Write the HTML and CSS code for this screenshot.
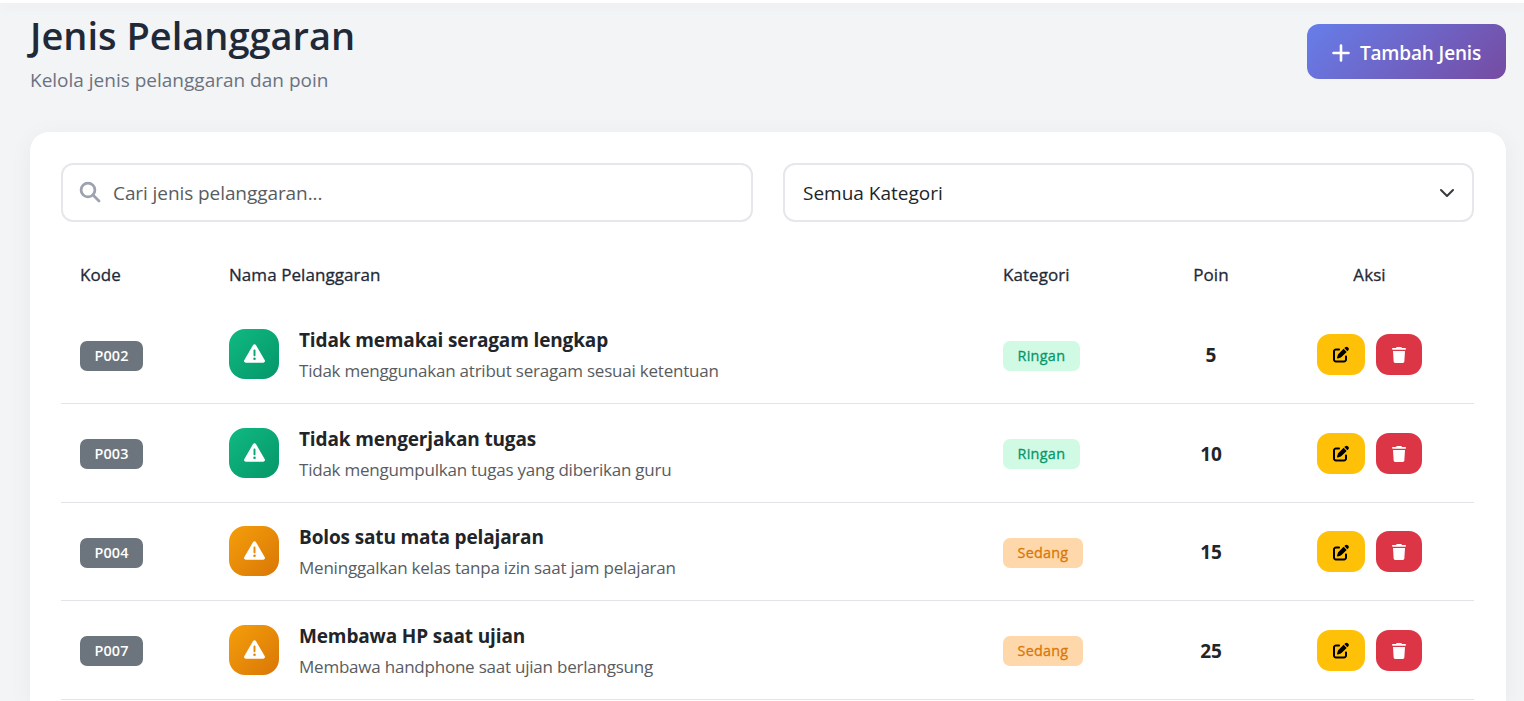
FILE: index.html
```html
<!DOCTYPE html>
<html lang="id">
<head>
<meta charset="utf-8">
<title>Jenis Pelanggaran</title>
<link rel="stylesheet" href="styles.css">
</head>
<body>
<svg class="sprite" aria-hidden="true">
  <symbol id="warning" viewBox="0 0 512 512"><path d="M256 32c14.200 0 27.300 7.500 34.500 19.800l216 368c7.300 12.400 7.300 27.700.2 40.100S486.300 480 472 480H40c-14.300 0-27.600-7.700-34.700-20.100s-7-27.800.2-40.100l216-368C228.700 39.500 241.800 32 256 32zm0 128c-13.300 0-24 10.700-24 24v112c0 13.300 10.700 24 24 24s24-10.700 24-24V184c0-13.300-10.700-24-24-24zm32 224a32 32 0 1 0-64 0 32 32 0 1 0 64 0z"/></symbol>
  <symbol id="edit" viewBox="0 0 512 512"><path d="M471.600 21.700c-21.900-21.900-57.300-21.900-79.200 0L362.300 51.700l97.900 97.900 30.100-30.100c21.900-21.900 21.900-57.300 0-79.200L471.600 21.700zm-299.200 220c-6.100 6.100-10.800 13.600-13.500 21.900l-29.600 88.800c-2.900 8.600-.6 18.100 5.800 24.600s15.900 8.700 24.600 5.800l88.800-29.600c8.200-2.700 15.700-7.400 21.900-13.500L437.700 172.300 339.700 74.300 172.400 241.700zM96 64C43 64 0 107 0 160v256c0 53 43 96 96 96h256c53 0 96-43 96-96v-96c0-17.700-14.300-32-32-32s-32 14.300-32 32v96c0 17.700-14.300 32-32 32H96c-17.700 0-32-14.300-32-32V160c0-17.700 14.300-32 32-32h96c17.700 0 32-14.300 32-32s-14.300-32-32-32H96z"/></symbol>
  <symbol id="trash" viewBox="0 0 448 512"><path d="M135.200 17.700L128 32H32C14.300 32 0 46.300 0 64s14.300 26 32 26h384c17.700 0 32-8.300 32-26s-14.300-32-32-32h-96l-7.200-14.300C307.400 6.800 296.300 0 284.200 0H163.800c-12.100 0-23.200 6.800-28.600 17.700zM416 128H32l21.200 339c1.600 25.300 22.600 45 47.900 45h245.800c25.300 0 46.300-19.700 47.900-45L416 128z"/></symbol>
</svg>
<div class="topbar"></div>
<main class="page">
  <header class="page-header">
    <div>
      <h1 class="page-title">Jenis Pelanggaran</h1>
      <p class="page-subtitle">Kelola jenis pelanggaran dan poin</p>
    </div>
    <button class="btn-add"><svg class="icon-plus" viewBox="0 0 18 18"><path d="M9 1.500v15M1.500 9h15"/></svg><span>Tambah Jenis</span></button>
  </header>
  <section class="card">
    <div class="filters">
      <div class="field">
        <svg class="icon-search" viewBox="0 0 22 22"><circle cx="9" cy="9" r="6.900"/><path d="M14 14l6 6"/></svg>
        <span class="placeholder">Cari jenis pelanggaran...</span>
      </div>
      <div class="field field-select">
        <span class="select-value">Semua Kategori</span>
        <svg class="icon-chevron" viewBox="0 0 16 16"><path d="M2 5l6 6 6-6"/></svg>
      </div>
    </div>
    <div class="table">
      <div class="row head">
        <div>Kode</div><div>Nama Pelanggaran</div><div>Kategori</div><div class="center">Poin</div><div class="center">Aksi</div>
      </div>
      <div class="row">
        <div><span class="badge code">P002</span></div>
        <div class="name"><span class="tile green"><svg><use href="#warning"/></svg></span><div class="info"><div class="title">Tidak memakai seragam lengkap</div><div class="desc">Tidak menggunakan atribut seragam sesuai ketentuan</div></div></div>
        <div><span class="badge light">Ringan</span></div>
        <div class="center points">5</div>
        <div class="actions"><button class="btn edit"><svg><use href="#edit"/></svg></button><button class="btn delete"><svg><use href="#trash"/></svg></button></div>
      </div>
      <div class="row">
        <div><span class="badge code">P003</span></div>
        <div class="name"><span class="tile green"><svg><use href="#warning"/></svg></span><div class="info"><div class="title">Tidak mengerjakan tugas</div><div class="desc">Tidak mengumpulkan tugas yang diberikan guru</div></div></div>
        <div><span class="badge light">Ringan</span></div>
        <div class="center points">10</div>
        <div class="actions"><button class="btn edit"><svg><use href="#edit"/></svg></button><button class="btn delete"><svg><use href="#trash"/></svg></button></div>
      </div>
      <div class="row">
        <div><span class="badge code">P004</span></div>
        <div class="name"><span class="tile orange"><svg><use href="#warning"/></svg></span><div class="info"><div class="title">Bolos satu mata pelajaran</div><div class="desc">Meninggalkan kelas tanpa izin saat jam pelajaran</div></div></div>
        <div><span class="badge medium">Sedang</span></div>
        <div class="center points">15</div>
        <div class="actions"><button class="btn edit"><svg><use href="#edit"/></svg></button><button class="btn delete"><svg><use href="#trash"/></svg></button></div>
      </div>
      <div class="row">
        <div><span class="badge code">P007</span></div>
        <div class="name"><span class="tile orange"><svg><use href="#warning"/></svg></span><div class="info"><div class="title">Membawa HP saat ujian</div><div class="desc">Membawa handphone saat ujian berlangsung</div></div></div>
        <div><span class="badge medium">Sedang</span></div>
        <div class="center points">25</div>
        <div class="actions"><button class="btn edit"><svg><use href="#edit"/></svg></button><button class="btn delete"><svg><use href="#trash"/></svg></button></div>
      </div>
    </div>
  </section>
</main>
</body>
</html>
```
FILE: styles.css
```css
* { box-sizing: border-box; }
body {
  margin: 0;
  background: #f3f4f6;
  color: #212529;
  font-family: "Open Sans", "Noto Sans", sans-serif;
  font-size: 19px;
}
button { border: 0; padding: 0; font: inherit; }
.sprite { display: none; }
.topbar { height: 3px; background: #fff; box-shadow: 0 2px 13px rgba(0, 0, 0, .08); }
.page { padding: 0 18px 0 30px; }
.page-header { display: flex; justify-content: space-between; height: 129px; }
.page-title {
  margin: 7px 0 0;
  font-size: 38px;
  line-height: 50px;
  font-weight: 600;
  color: #1f2937;
  white-space: nowrap;
}
.page-subtitle {
  margin: 5px 0 0;
  font-size: 19px;
  line-height: 30px;
  color: #6b7280;
}
.btn-add {
  display: flex;
  align-items: center;
  justify-content: center;
  gap: 10px;
  width: 199px;
  height: 55px;
  margin-top: 21px;
  padding-top: 2px;
  border-radius: 12px;
  background: linear-gradient(135deg, #667eea, #764ba2);
  color: #fff;
  font-weight: 600;
  letter-spacing: -.15px;
  white-space: nowrap;
}
.icon-plus { width: 18px; height: 18px; fill: none; stroke: #fff; stroke-width: 2.6; stroke-linecap: round; }
.card {
  height: 569px;
  padding: 31px 32px 0 31px;
  border-radius: 19px 19px 0 0;
  background: #fff;
  box-shadow: 0 5px 25px rgba(0, 0, 0, .05);
}
.filters { display: grid; grid-template-columns: 692px 691px; gap: 30px; }
.field {
  display: flex;
  align-items: center;
  height: 59px;
  padding: 0 16px;
  border: 2px solid #e5e7eb;
  border-radius: 12px;
}
.icon-search { width: 22px; height: 22px; margin-bottom: 2px; fill: none; stroke: #9ca3af; stroke-width: 2.8; stroke-linecap: round; }
.placeholder { margin-left: 12px; letter-spacing: -.08px; color: #595c5f; }
.field-select { justify-content: space-between; padding: 0 17px 0 18px; }
.icon-chevron { width: 16px; height: 16px; fill: none; stroke: #343a40; stroke-width: 2; stroke-linecap: round; stroke-linejoin: round; }
.row {
  display: grid;
  grid-template-columns: 149px 774px 173px 108px 209px;
  align-items: center;
  height: 98.600px;
  border-bottom: 1px solid #e2e4e8;
}
.row > div { padding: 0 19px; white-space: nowrap; }
.row.head {
  height: 83.400px;
  padding-top: 22px;
  border: 0;
  color: #1f2937;
  font-size: 17px;
  line-height: 24px;
  letter-spacing: .06px;
  -webkit-text-stroke: .3px #1f2937;
}
.row > .center { padding: 0; text-align: center; }
.badge {
  display: block;
  width: max-content;
  height: 30px;
  margin-top: 3px;
  padding: 0 14.500px;
  border-radius: 7px;
  font-size: 14.400px;
  line-height: 30px;
}
.code { background: #6c757d; color: #fff; font-weight: 600; letter-spacing: .15px; }
.light { background: #d1fae5; color: #059669; letter-spacing: .3px; -webkit-text-stroke: .3px #059669; }
.medium { background: #fed7aa; color: #d97706; letter-spacing: .25px; -webkit-text-stroke: .3px #d97706; }
.name { display: flex; align-items: center; gap: 20px; }
.info { padding-top: 3px; }
.tile {
  display: flex;
  align-items: center;
  justify-content: center;
  width: 50px;
  height: 50px;
  border-radius: 16px;
}
.tile svg { width: 21px; height: 21px; margin-bottom: 1px; fill: #fff; }
.green { background: linear-gradient(135deg, #10b981, #059669); }
.orange { background: linear-gradient(135deg, #f59e0b, #d97706); }
.title { font-size: 19px; line-height: 30px; font-weight: 700; letter-spacing: -.14px; }
.desc { font-size: 17px; line-height: 31px; letter-spacing: -.22px; color: #595c5f; }
.row > .points { padding-top: 2px; font-weight: 700; }
.row > .actions { display: flex; justify-content: center; gap: 11px; padding-top: .500px; }
.btn { display: flex; align-items: center; justify-content: center; height: 41px; border-radius: 13px; }
.edit { width: 48px; background: #ffc107; }
.delete { width: 46px; background: #dc3545; }
.edit svg { width: 16px; height: 17px; margin-top: 1px; fill: #000; }
.delete svg { width: 14px; height: 16px; margin-top: 1px; fill: #fff; }
```
